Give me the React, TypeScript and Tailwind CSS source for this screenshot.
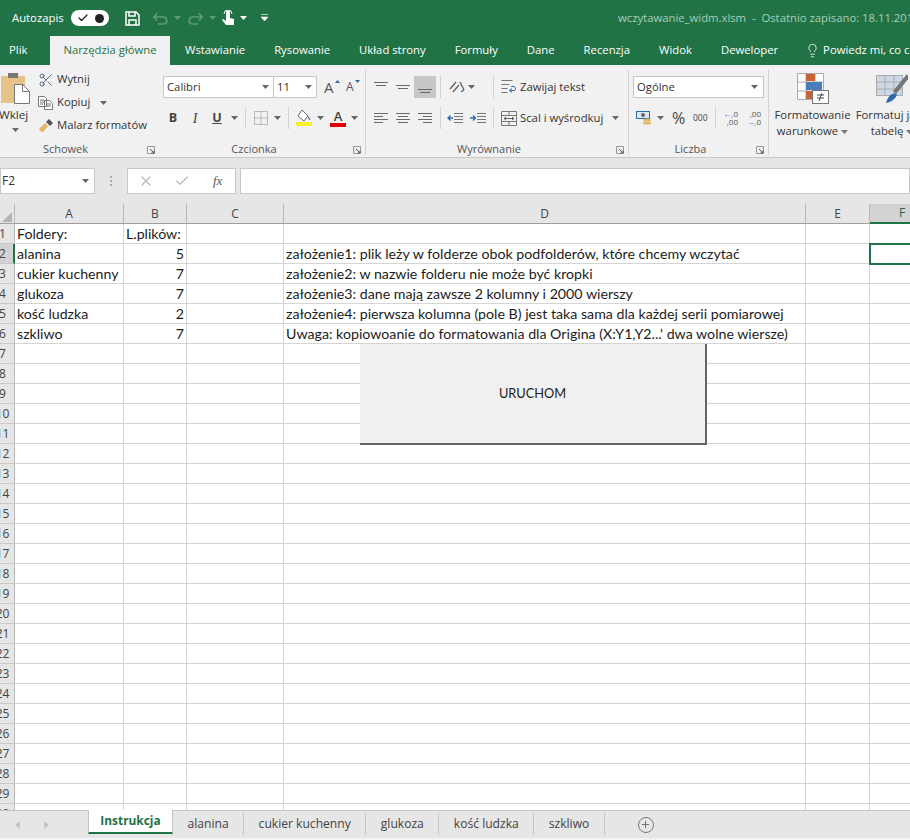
import type { ReactNode } from "react"
import { Check, Lightbulb, Plus, Scissors, X } from "lucide-react"

const tabs = ["Wstawianie", "Rysowanie", "Układ strony", "Formuły", "Dane", "Recenzja", "Widok", "Deweloper"]
const sheets = ["alanina", "cukier kuchenny", "glukoza", "kość ludzka", "szkliwo"]

const rows: [string, string, string][] = [
  ["Foldery:", "L.plików:", ""],
  ["alanina", "5", "założenie1: plik leży w folderze obok podfolderów, które chcemy wczytać"],
  ["cukier kuchenny", "7", "założenie2: w nazwie folderu nie może być kropki"],
  ["glukoza", "7", "założenie3: dane mają zawsze 2 kolumny i 2000 wierszy"],
  ["kość ludzka", "2", "założenie4: pierwsza kolumna (pole B) jest taka sama dla każdej serii pomiarowej"],
  ["szkliwo", "7", "Uwaga: kopiowoanie do formatowania dla Origina (X:Y1,Y2...' dwa wolne wiersze)"],
]

function Caret({ className = "text-[#666]" }: { className?: string }) {
  return (
    <svg width="7" height="4" viewBox="0 0 7 4" className={`shrink-0 ${className}`}>
      <path d="M0 0h7L3.5 4z" fill="currentColor" />
    </svg>
  )
}

function CaretSlot({ className = "" }: { className?: string }) {
  return (
    <span className={`flex w-3 justify-center ${className}`}>
      <Caret />
    </span>
  )
}

function VLine({ className = "" }: { className?: string }) {
  return <span className={`h-[22px] w-px bg-[#d2d2d2] ${className}`} />
}

function Launcher() {
  return (
    <svg width="8" height="8" viewBox="0 0 8 8" className="absolute right-[4px] top-[5px]">
      <path d="M.5 7.5v-7h7v7z" fill="none" stroke="#999" />
      <path d="M3 3l4 4M7 4.5V7H4.5" fill="none" stroke="#555" />
    </svg>
  )
}

function Lines({ d, w = 14, h = 14 }: { d: string; w?: number; h?: number }) {
  return (
    <svg width={w} height={h} viewBox={`0 0 ${w} ${h}`}>
      <path d={d} fill="none" stroke="#6a6a6a" />
    </svg>
  )
}

function Group({ width, label, children }: { width: string; label: string; children: ReactNode }) {
  return (
    <div className={`relative flex flex-col ${width}`}>
      <div className="flex h-[76px] flex-col pt-[11px]">{children}</div>
      <div className="relative h-[16px] pr-[16px] text-center text-[11px] leading-[15px] text-[#555]">
        {label}
        <Launcher />
      </div>
    </div>
  )
}

function GroupSep() {
  return <div className="mt-[5px] h-[85px] w-px shrink-0 bg-[#d2d2d2]" />
}

function Clipboard() {
  return (
    <div className="flex w-[159px] shrink-0 flex-col">
      <div className="flex h-[76px]">
        <div className="flex w-[30px] flex-col items-center overflow-hidden pt-[7px]">
          <svg width="30" height="33" viewBox="0 0 30 33" className="shrink-0">
            <rect x="1" y="4" width="24" height="27" fill="#e6c188" />
            <rect x="8" y="1" width="10" height="5" fill="#777" />
            <path d="M14.5 12.5h8l7 7v12h-15z" fill="#fff" stroke="#777" />
            <path d="M22.5 12.5v7h7" fill="none" stroke="#777" />
          </svg>
          <span className="mr-[3px] mt-[1px] text-[11.6px] leading-[17px] text-[#333]">Wklej</span>
          <span className="mt-[5px]">
            <Caret />
          </span>
        </div>
        <div className="ml-[8px] flex flex-col pt-[3px] text-[11.3px] text-[#333]">
          <div className="flex h-[23px] items-center gap-[3px]">
            <Scissors size={16} strokeWidth={1.3} className="text-[#44597a]" />
            <span>Wytnij</span>
          </div>
          <div className="flex h-[23px] items-center gap-[3px]">
            <svg width="16" height="14" viewBox="0 0 16 14">
              <path d="M.5.5h6l2 2v8H.5zM6.5 4.5h5l3 3v6h-8zM2 4h4M2 6h4M2 8h3M8 8h5M8 10h5" fill="#fff" stroke="#777" />
            </svg>
            <span>Kopiuj</span>
            <span className="ml-[7px]">
              <Caret />
            </span>
          </div>
          <div className="flex h-[23px] items-center gap-[3px]">
            <svg width="16" height="14" viewBox="0 0 16 14">
              <path d="M1 10l6-6 3 3-5 6c-2 0-3-1-4-3z" fill="#e0b56e" />
              <path d="M8 3l3-3 4 4-3 3z" fill="#555" />
            </svg>
            <span>Malarz formatów</span>
          </div>
        </div>
      </div>
      <div className="relative h-[16px] pr-[28px] text-center text-[11px] leading-[15px] text-[#555]">
        Schowek
        <Launcher />
      </div>
    </div>
  )
}

function FontGroup() {
  return (
    <Group width="w-[206px] shrink-0" label="Czcionka">
      <div className="flex h-[22px] items-center">
        <div className="ml-[4px] flex h-[22px] w-[111px] items-center justify-between border border-[#c6c6c6] bg-white pl-[3px] pr-[4px] text-[11.3px] text-[#333]">
          Calibri
          <Caret />
        </div>
        <div className="-ml-px flex h-[22px] w-[44px] items-center justify-between border border-[#c6c6c6] bg-white pl-[3px] pr-[4px] text-[11.3px] text-[#333]">
          11
          <Caret />
        </div>
        <span className="relative ml-[7px] w-[16px] text-[15px] leading-none text-[#555]">
          A
          <svg width="5" height="3" viewBox="0 0 5 3" className="absolute right-0 top-0">
            <path d="M0 3h5L2.500 0z" fill="#2d6ba8" />
          </svg>
        </span>
        <span className="relative ml-[6px] w-[14px] text-[12px] text-[#555]">
          A
          <svg width="5" height="3" viewBox="0 0 5 3" className="absolute right-0 top-[2px]">
            <path d="M0 0h5L2.500 3z" fill="#2d6ba8" />
          </svg>
        </span>
      </div>
      <div className="mt-[9px] flex h-[22px] items-center">
        <span className="ml-[3px] w-[22px] text-center text-[12.500px] font-bold text-[#444]">B</span>
        <span className="w-[22px] text-center font-['Liberation_Serif',serif] text-[14px] italic text-[#444]">I</span>
        <span className="w-[22px] text-center text-[12.500px] font-bold text-[#444] underline">U</span>
        <CaretSlot />
        <VLine className="ml-[5px]" />
        <span className="ml-[8px]">
          <svg width="14" height="14" viewBox="0 0 14 14">
            <path d="M.5.5h13v13H.5zM7 .5v13M.5 7h13" fill="none" stroke="#888" strokeDasharray="1 1" />
          </svg>
        </span>
        <CaretSlot className="ml-[3px]" />
        <VLine className="ml-[5px]" />
        <span className="ml-[7px]">
          <svg width="16" height="18" viewBox="0 0 16 18">
            <path d="M6 1l6 6-4 5-6-5z" fill="#fff" stroke="#666" />
            <path d="M12 7c2 2 3 3 2 4-1 0-2-1-2-4z" fill="#4d7fb5" />
            <rect y="13" width="16" height="4" fill="#f7ee2f" />
          </svg>
        </span>
        <CaretSlot className="ml-[2px]" />
        <span className="relative ml-[4px] flex h-[18px] w-[16px] flex-col items-center">
          <span className="text-[13px] font-semibold leading-[14px] text-[#444]">A</span>
          <span className="h-[4px] w-[16px] bg-[#e00000]" />
        </span>
        <CaretSlot className="ml-[2px]" />
      </div>
    </Group>
  )
}

function Cell22({ d, active = false }: { d: string; active?: boolean }) {
  return (
    <span className={`flex h-[22px] w-[22px] items-center justify-center ${active ? "bg-[#c6c6c6]" : ""}`}>
      <Lines d={d} />
    </span>
  )
}

const alignTop = "M0 2.5h14M2 5.5h10"
const alignMid = "M0 5.5h14M2 8.5h10"
const alignBot = "M0 9.5h14M2 12.5h10"
const alignLeft = "M0 2.5h14M0 5.5h9M0 8.5h14M0 11.5h9"
const alignCenter = "M0 2.5h14M2 5.5h10M0 8.5h14M2 11.5h10"
const alignRight = "M0 2.5h14M5 5.5h9M0 8.5h14M5 11.5h9"

function AlignGroup() {
  return (
    <Group width="w-[262px] shrink-0" label="Wyrównanie">
      <div className="flex h-[22px] items-center">
        <span className="ml-[4px] flex">
          <Cell22 d={alignTop} />
          <Cell22 d={alignMid} />
          <Cell22 d={alignBot} active />
        </span>
        <VLine className="ml-[4px]" />
        <span className="ml-[8px]">
          <svg width="16" height="14" viewBox="0 0 16 14">
            <path d="M1 9l6-7M4 12l6-7M11 2l4 8" fill="none" stroke="#666" strokeWidth="1.4" />
            <path d="M12 12l3-2" stroke="#2d6ba8" strokeWidth="1.4" />
          </svg>
        </span>
        <span className="ml-[2px] flex w-2 justify-center">
          <Caret />
        </span>
        <VLine className="ml-[18px]" />
        <span className="ml-[7px]">
          <svg width="16" height="15" viewBox="0 0 16 15">
            <path d="M.5.5h11M.5 4.5h8M.5 8.5h6M.5 12.5h6" fill="none" stroke="#777" />
            <path d="M9 10.5h4c2 0 2-4 0-4h-3" fill="none" stroke="#2d6ba8" />
            <path d="M11 8.5l-2.5 2 2.5 2" fill="none" stroke="#2d6ba8" />
          </svg>
        </span>
        <span className="ml-[3px] text-[11.3px] text-[#333]">Zawijaj tekst</span>
      </div>
      <div className="mt-[9px] flex h-[22px] items-center">
        <span className="ml-[4px] flex">
          <Cell22 d={alignLeft} />
          <Cell22 d={alignCenter} />
          <Cell22 d={alignRight} />
        </span>
        <VLine className="ml-[4px]" />
        <span className="ml-[6px]">
          <svg width="16" height="14" viewBox="0 0 16 14">
            <path d="M7 2.5h9M7 5.5h9M7 8.5h9M7 11.5h9" stroke="#777" />
            <path d="M6 7H1M3.5 4.5L1 7l2.5 2.5" fill="none" stroke="#2d6ba8" strokeWidth="1.3" />
          </svg>
        </span>
        <span className="ml-[7px]">
          <svg width="16" height="14" viewBox="0 0 16 14">
            <path d="M7 2.5h9M7 5.5h9M7 8.5h9M7 11.5h9" stroke="#777" />
            <path d="M0 7h5M3 4.5L5.500 7 3 9.500" fill="none" stroke="#2d6ba8" strokeWidth="1.3" />
          </svg>
        </span>
        <VLine className="ml-[7px]" />
        <span className="ml-[7px]">
          <svg width="16" height="15" viewBox="0 0 16 15">
            <path d="M.5.500h15v14H.5zM.5 4.500h15M.5 10.500h15M8 .500v4M8 10.500v4" fill="none" stroke="#777" />
            <path d="M3 7.500h10M5 6l-2 1.500L5 9M11 6l2 1.500L11 9" fill="none" stroke="#666" />
          </svg>
        </span>
        <span className="ml-[3px] text-[11.3px] text-[#333]">Scal i wyśrodkuj</span>
        <span className="ml-[9px]">
          <Caret />
        </span>
      </div>
    </Group>
  )
}

function NumberGroup() {
  return (
    <Group width="w-[139px] shrink-0" label="Liczba">
      <div className="ml-[4px] flex h-[22px] w-[131px] items-center justify-between border border-[#c6c6c6] bg-white pl-[3px] pr-[5px] text-[11.3px] text-[#333]">
        Ogólne
        <Caret />
      </div>
      <div className="mt-[9px] flex h-[22px] items-center">
        <span className="ml-[7px]">
          <svg width="16" height="15" viewBox="0 0 16 15">
            <rect x=".5" y=".5" width="13" height="7" fill="#dbe7f3" stroke="#2d6ba8" />
            <circle cx="7" cy="4" r="2" fill="#666" />
            <ellipse cx="11" cy="9" rx="4" ry="1.500" fill="#e4b95f" />
            <ellipse cx="11" cy="12" rx="4" ry="1.500" fill="#e4b95f" />
          </svg>
        </span>
        <CaretSlot className="ml-[2px]" />
        <span className="ml-[6px] w-[14px] text-[16px] leading-none text-[#444]">%</span>
        <span className="ml-[7px] w-[15px] text-[8.500px] text-[#444]">000</span>
        <VLine className="ml-[7px]" />
        <span className="ml-[7px] flex w-[15px] flex-col whitespace-nowrap text-right text-[8px] leading-[8px] text-[#555]">
          <span>
            <span className="text-[#2d6ba8]">←</span>,0
          </span>
          <span>,00</span>
        </span>
        <span className="ml-[8px] flex w-[15px] flex-col whitespace-nowrap text-right text-[8px] leading-[8px] text-[#555]">
          <span>,00</span>
          <span>
            <span className="text-[#2d6ba8]">→</span>,0
          </span>
        </span>
      </div>
    </Group>
  )
}

function StyleButtons() {
  return (
    <div className="flex min-w-0 flex-1 text-center text-[11.3px] leading-[16px] text-[#333]">
      <div className="flex w-[87px] shrink-0 flex-col items-center pt-[8px]">
        <svg width="32" height="31" viewBox="0 0 32 31" className="shrink-0">
          <path d="M.5.5h26v26H.5zM9 .5v26M18 .5v26M.5 9h26M.5 18h26" fill="#fff" stroke="#aaa" />
          <rect x="9" y="1" width="9" height="7" fill="#c9633a" />
          <rect x="9" y="9" width="16" height="8" fill="#4a7ebb" />
          <rect x="9" y="18" width="9" height="8" fill="#c9633a" />
          <rect x="15.500" y="17.500" width="16" height="13" fill="#fff" stroke="#777" />
          <path d="M20 22h7M20 25h7M25 20l-3 8" fill="none" stroke="#444" />
        </svg>
        <span className="mt-[3px] whitespace-nowrap">Formatowanie</span>
        <span className="whitespace-nowrap">
          warunkowe <Caret className="inline text-[#777]" />
        </span>
      </div>
      <div className="flex w-[72px] shrink-0 flex-col items-center pt-[8px]">
        <svg width="32" height="31" viewBox="0 0 32 31" className="shrink-0">
          <path d="M.5 2.500h26v20H.5z" fill="#ccd8e6" stroke="#aaa" />
          <path d="M9 2.500v20M18 2.500v20M.5 9h26M.5 16h26" stroke="#aaa" fill="none" />
          <path d="M31 1L17 18l3 3L33 5z" fill="#777" />
          <path d="M10 30c2-7 6-11 11-9-1 5-6 8-11 9z" fill="#2d6ba8" />
        </svg>
        <span className="mt-[3px] whitespace-nowrap">Formatuj jako</span>
        <span className="whitespace-nowrap">
          tabelę <Caret className="inline text-[#777]" />
        </span>
      </div>
    </div>
  )
}

function TitleBar() {
  return (
    <div className="flex h-[36px] shrink-0 items-center bg-[#217346] text-white">
      <span className="ml-[12px] w-[52px] shrink-0 whitespace-nowrap text-[11.3px]">Autozapis</span>
      <div className="ml-[7px] flex h-[16px] w-[38px] shrink-0 items-center justify-between rounded-full bg-white px-[5px] text-[#222]">
        <Check size={12} strokeWidth={2.5} className="ml-[1px]" />
        <span className="h-[9px] w-[9px] rounded-full bg-[#222]" />
      </div>
      <svg width="15" height="15" viewBox="0 0 15 15" className="ml-[16px] shrink-0">
        <path d="M1 1h10l3 3v10H1zM4 1v4h6V1M4 14V9h7v5" fill="none" stroke="#fff" strokeWidth="1.500" />
      </svg>
      <svg width="15" height="13" viewBox="0 0 15 13" className="ml-[13px] shrink-0">
        <path d="M1 5h9c5 0 5 7 0 7H5M4 1.500L1 5l3 3.500" fill="none" stroke="#5f9a7a" strokeWidth="1.700" />
      </svg>
      <Caret className="ml-[6px] text-[#5f9a7a]" />
      <svg width="15" height="13" viewBox="0 0 15 13" className="ml-[7px] shrink-0">
        <path d="M14 5H5c-5 0-5 7 0 7h5M11 1.500L14 5l-3 3.500" fill="none" stroke="#5f9a7a" strokeWidth="1.700" />
      </svg>
      <Caret className="ml-[6px] text-[#5f9a7a]" />
      <svg width="14" height="17" viewBox="0 0 14 17" className="ml-[5px] shrink-0">
        <path d="M5 2.500a2 2 0 0 1 4 0V8l4 1v6H5L1 10l1-1 3 2z" fill="#fff" />
        <path d="M3 4a4 4 0 0 1 8 0" fill="none" stroke="#fff" />
      </svg>
      <Caret className="ml-[5px] text-white" />
      <svg width="7" height="8" viewBox="0 0 7 8" className="ml-[14px] shrink-0">
        <path d="M0 .5h7M0 3h7L3.500 7z" fill="#fff" stroke="#fff" strokeWidth=".6" />
      </svg>
      <span className="ml-[350px] shrink-0 whitespace-nowrap text-[11.3px] text-[#a8cdb8]">
        wczytawanie_widm.xlsm&nbsp; - &nbsp;Ostatnio zapisano: 18.11.2017
      </span>
    </div>
  )
}

function TabRow() {
  return (
    <div className="flex h-[29px] shrink-0 items-stretch overflow-hidden bg-[#217346] text-[11.3px] text-white">
      <span className="ml-[9px] flex w-[19px] shrink-0 items-center">Plik</span>
      <span className="-mt-px ml-[22px] flex w-[120px] shrink-0 items-center justify-center whitespace-nowrap bg-[#f1f1f1] text-[#217346]">Narzędzia główne</span>
      <div className="ml-[15px] flex shrink-0 gap-[29px]">
        {tabs.map((t) => (
          <span key={t} className="flex items-center whitespace-nowrap">
            {t}
          </span>
        ))}
        <span className="-ml-[2px] flex items-center whitespace-nowrap">
          <Lightbulb size={15} strokeWidth={1.2} className="mr-[3px]" />
          Powiedz mi, co chcesz zrobić
        </span>
      </div>
    </div>
  )
}

function FormulaBar() {
  return (
    <div className="flex h-[47px] shrink-0 border-t border-[#c8c8c8] bg-[#e6e6e6] pt-[10px] text-[12px] text-[#333]">
      <div className="flex h-[26px] w-[95px] items-center justify-between border border-[#c8c8c8] bg-white pl-[1px] pr-[5px]">
        F2
        <Caret />
      </div>
      <div className="ml-[15px] flex h-[26px] w-[2px] flex-col items-center justify-center gap-[2px]">
        <span className="h-[2px] w-[2px] bg-[#aaa]" />
        <span className="h-[2px] w-[2px] bg-[#aaa]" />
        <span className="h-[2px] w-[2px] bg-[#aaa]" />
      </div>
      <div className="ml-[15px] flex h-[26px] w-[109px] items-center border border-[#c8c8c8] bg-white">
        <X size={16} strokeWidth={2} className="ml-[10px] text-[#bcbcbc]" />
        <Check size={16} strokeWidth={2} className="ml-[20px] text-[#bcbcbc]" />
        <span className="ml-[23px] font-['Liberation_Serif',serif] text-[13px] italic text-[#555]">fx</span>
      </div>
      <div className="ml-[4px] h-[26px] flex-1 border border-[#c8c8c8] bg-white" />
    </div>
  )
}

const colClass = ["w-[109px]", "w-[63px]", "w-[97px]", "w-[522px]", "w-[64px]"]

function ColHeader({ label, className }: { label: string; className: string }) {
  return (
    <div className={`flex h-[20px] shrink-0 items-center justify-center border-b border-r border-b-[#9e9e9e] border-r-[#b8b8b8] text-[12px] text-[#444] ${className}`}>
      {label}
    </div>
  )
}

function Row({ num, data }: { num: number; data?: [string, string, string] }) {
  const active = num === 2
  return (
    <div className="flex h-[20px] shrink-0">
      <div className={`flex w-[15px] shrink-0 overflow-hidden border-b border-r border-b-[#c8c8c8] font-['Open_Sans',sans-serif] text-[12px] leading-[19px] text-[#444] ${active ? "border-r-2 border-r-[#217346] bg-[#d2d2d2]" : "border-r-[#b8b8b8] bg-[#e6e6e6]"}`}>
        <span className="-ml-[13px] w-[31px] shrink-0 text-center">{num}</span>
      </div>
      <div className={`${colClass[0]} shrink-0 whitespace-nowrap border-b border-r border-[#d4d4d4] pl-[2px] leading-[19px]`}>{data?.[0]}</div>
      <div className={`${colClass[1]} shrink-0 whitespace-nowrap border-b border-r border-[#d4d4d4] px-[2px] leading-[19px] ${num > 1 ? "text-right" : ""}`}>{data?.[1]}</div>
      <div className={`${colClass[2]} shrink-0 border-b border-r border-[#d4d4d4]`} />
      <div className={`${colClass[3]} shrink-0 whitespace-nowrap border-b border-r border-[#d4d4d4] pl-[2px] leading-[19px]`}>{data?.[2]}</div>
      <div className={`${colClass[4]} shrink-0 border-b border-r border-[#d4d4d4]`} />
      <div className="flex-1 border-b border-[#d4d4d4]" />
    </div>
  )
}

function Sheet() {
  return (
    <div className="relative flex min-h-0 flex-1 flex-col overflow-hidden bg-white font-['Lato',sans-serif] text-[14.200px] text-[#1c1c1c]">
      <div className="flex h-[20px] shrink-0 bg-[#e6e6e6] font-['Open_Sans',sans-serif]">
        <div className="flex h-[20px] w-[15px] shrink-0 items-end border-b border-r border-b-[#9e9e9e] border-r-[#b8b8b8] pb-[1px] pl-[2px]">
          <svg width="10" height="10" viewBox="0 0 10 10">
            <path d="M10 0v10H0z" fill="#b4b4b4" />
          </svg>
        </div>
        <ColHeader label="A" className={colClass[0]} />
        <ColHeader label="B" className={colClass[1]} />
        <ColHeader label="C" className={colClass[2]} />
        <ColHeader label="D" className={colClass[3]} />
        <ColHeader label="E" className={colClass[4]} />
        <div className="flex h-[20px] w-[64px] shrink-0 items-center justify-center border-b-2 border-[#217346] bg-[#d2d2d2] text-[12px] text-[#2f5f48]">F</div>
      </div>
      {Array.from({ length: 30 }, (_, i) => (
        <Row key={i} num={i + 1} data={rows[i]} />
      ))}

      {/* button shape lying over the cells */}
      <div className="absolute left-[360px] top-[140px] flex h-[101px] w-[347px] items-center justify-center border-b-2 border-r-2 border-b-[#666] border-r-[#666] bg-[#f0f0f0] text-[12.800px]">
        URUCHOM
      </div>
      {/* selected cell F2 */}
      <div className="absolute left-[869px] top-[39px] h-[22px] w-[60px] border-2 border-[#217346]" />
    </div>
  )
}

function SheetTabs() {
  return (
    <div className="flex h-[28px] shrink-0 items-stretch border-t border-[#c4c4c4] bg-[#e6e6e6] text-[12.100px] text-[#444]">
      <div className="flex w-[88px] shrink-0 items-center text-[#c4c4c4]">
        <svg width="5" height="8" viewBox="0 0 5 8" className="ml-[15px]">
          <path d="M5 0v8L0 4z" fill="currentColor" />
        </svg>
        <svg width="5" height="8" viewBox="0 0 5 8" className="ml-[24px]">
          <path d="M0 0v8l5-4z" fill="currentColor" />
        </svg>
      </div>
      <div className="-mt-px flex h-[24px] w-[85px] items-center justify-center border-b-2 border-l border-r border-b-[#217346] border-l-[#c4c4c4] border-r-[#c4c4c4] bg-white text-[11.900px] font-bold text-[#217346]">
        Instrukcja
      </div>
      {sheets.map((s) => (
        <div key={s} className="my-[2px] flex h-[22px] items-center whitespace-nowrap border-r border-[#c4c4c4] px-[14.500px]">
          {s}
        </div>
      ))}
      <div className="ml-[33px] flex items-center">
        <span className="flex h-[16px] w-[16px] items-center justify-center rounded-full border border-[#777] text-[#666]">
          <Plus size={11} strokeWidth={2} />
        </span>
      </div>
    </div>
  )
}

export default function App() {
  return (
    <div className="flex h-[840px] w-[910px] flex-col overflow-hidden bg-[#f3f3f3] font-['Open_Sans',sans-serif]">
      <TitleBar />
      <TabRow />
      <div className="flex h-[92px] shrink-0 overflow-hidden bg-[#f1f1f1]">
        <Clipboard />
        <FontGroup />
        <GroupSep />
        <AlignGroup />
        <GroupSep />
        <NumberGroup />
        <GroupSep />
        <StyleButtons />
      </div>
      <FormulaBar />
      <Sheet />
      <SheetTabs />
      <div className="h-[2px] shrink-0 bg-[#f3f3f3]" />
    </div>
  )
}
